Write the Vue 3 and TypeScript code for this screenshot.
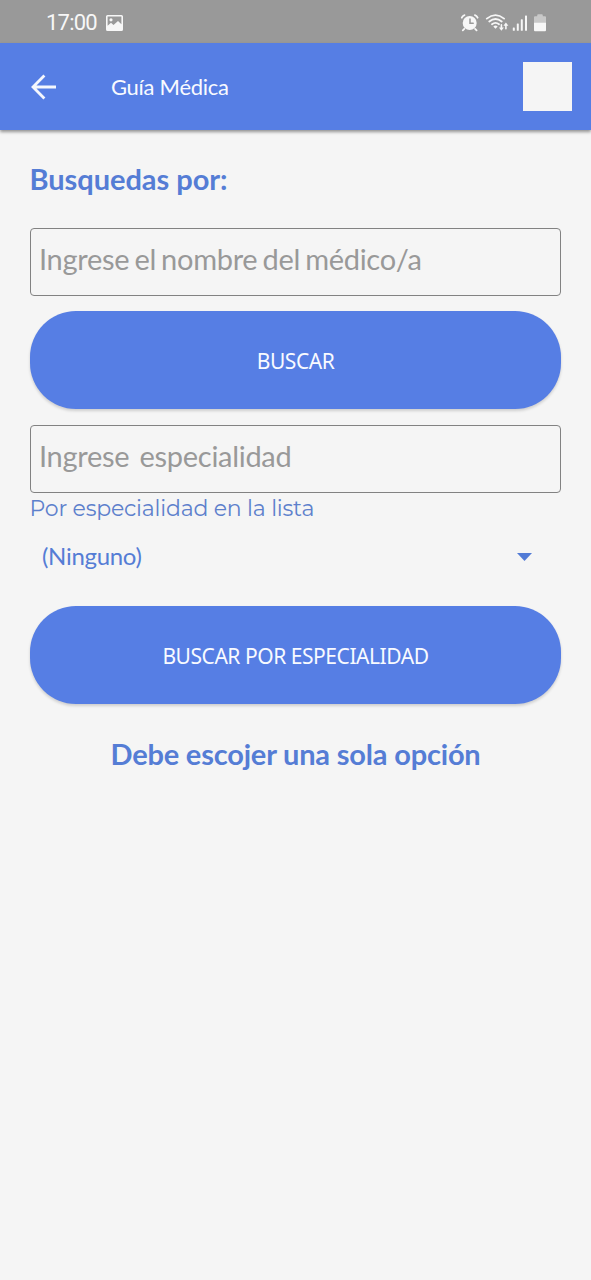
<script setup lang="ts">
import { ref } from 'vue'

const doctor = ref('')
const specialty = ref('')
const selected = ref('(Ninguno)')
</script>

<template>
  <div class="screen">
    <div class="status">
      <span class="time">17:00</span>
      <svg class="picture" width="17" height="16" viewBox="0 0 17 16">
        <path fill="#f7f7f7" fill-rule="evenodd" d="M1.5 0h14A1.5 1.5 0 0 1 17 1.5v13a1.5 1.5 0 0 1-1.5 1.5h-14A1.5 1.5 0 0 1 0 14.5v-13A1.5 1.5 0 0 1 1.5 0ZM1.6 1.6v9.2L5 7.8l2.5 2.1L12 6.1l3.4 3.2V1.6ZM5 3.2a1.6 1.6 0 1 1 0 3.2a1.6 1.6 0 0 1 0-3.2Z" />
      </svg>
      <svg class="indicators" width="88" height="20" viewBox="460 12.5 88 20">
        <g fill="none" stroke="#f7f7f7" stroke-linecap="round">
          <path stroke-width="1.8" d="M461.8 17.2q.8-2 2.7-2.6M477.6 17.2q-.8-2-2.7-2.6M464.3 28.3l-1.5 1.5M475.1 28.3l1.5 1.5" />
          <circle cx="469.7" cy="22.5" r="7" fill="#f7f7f7" stroke="none" />
          <path stroke="#999" stroke-width="1.5" d="M470 18.5v4.3h3.2" />
          <path stroke-width="1.8" d="M486.8 18.1q8.7-7 17.3 0M489.3 21q6.2-5.1 12.4 0M492 23.8q3.5-2.8 7 0" />
          <path stroke-width="1.6" d="M501.4 24.2v4M505.9 28.2v-4" />
        </g>
        <g fill="#f7f7f7">
          <path d="M493.3 26q2.2-1.8 4.4 0l-2.2 2.3ZM498.9 27h5l-2.5 3.2ZM503.4 25.3h5l-2.5-3.2Z" />
          <rect x="512.8" y="27" width="2" height="3.3" rx=".6" />
          <rect x="516.8" y="23" width="2" height="7.3" rx=".6" />
          <rect x="520.8" y="18.8" width="2" height="11.5" rx=".6" />
          <rect x="525" y="15" width="2" height="15.3" rx=".6" />
          <path opacity=".5" d="M534 22v-5.2q0-1 1-1h2.2v-1q0-1 1-1h3.6q1 0 1 1v1h2.2q1 0 1 1V22Z" />
          <path d="M534 22h12v7.7q0 1-1 1h-10q-1 0-1-1Z" />
        </g>
      </svg>
    </div>

    <header class="bar">
      <button class="back" type="button" aria-label="Volver">
        <svg width="26" height="26" viewBox="0 0 26 26">
          <path fill="none" stroke="#f4f7fd" stroke-width="2.8" d="M25 13H2.5M13.4 1.5L2 13l11.4 11.5" />
        </svg>
      </button>
      <h1 class="title">Guía Médica</h1>
      <div class="tile"></div>
    </header>

    <main class="content">
      <h2 class="heading"><span>Busquedas por:</span></h2>
      <input v-model="doctor" class="field" type="text" placeholder="Ingrese el nombre del médico/a" />
      <button class="action first" type="button"><span>BUSCAR</span></button>
      <input v-model="specialty" class="field" type="text" placeholder="Ingrese  especialidad" />
      <p class="caption"><span>Por especialidad en la lista</span></p>
      <div class="select">
        <span>{{ selected }}</span>
        <svg width="15" height="8" viewBox="0 0 15 8"><path fill="#527bd6" d="M0 0h15L7.5 8Z" /></svg>
      </div>
      <button class="action" type="button"><span>BUSCAR POR ESPECIALIDAD</span></button>
      <p class="notice"><span>Debe escojer una sola opción</span></p>
    </main>
  </div>
</template>

<style>
body {
  margin: 0;
  background: #f5f5f5;
}
</style>

<style scoped>
.screen {
  box-sizing: border-box;
  width: 100%;
  min-height: 1280px;
  background: #f5f5f5;
  font-family: Lato, sans-serif;
}

.status {
  display: flex;
  align-items: center;
  box-sizing: border-box;
  height: 43px;
  padding: 2px 43px 0 46px;
  background: #999;
  color: #f7f7f7;
}

.time {
  width: 60px;
  font: 22px/26px Roboto, sans-serif;
  letter-spacing: -0.8px;
}

.indicators {
  margin-left: auto;
}

.bar {
  display: flex;
  align-items: center;
  box-sizing: border-box;
  height: 87px;
  padding: 0 19px 0 30.5px;
  background: #567ee4;
  box-shadow: 0 2px 3px rgba(0, 0, 0, 0.4);
}

.back {
  display: flex;
  width: 80.5px;
  padding: 0;
  border: 0;
  background: none;
}

.title {
  margin: 0;
  color: #f8faff;
  font-size: 22px;
  font-weight: 400;
  line-height: 28px;
  letter-spacing: -0.28px;
}

.tile {
  width: 49px;
  height: 49px;
  margin-left: auto;
  background: #f5f5f5;
}

.content {
  display: flex;
  flex-direction: column;
  padding: 31px 30px 0;
}

.heading,
.notice {
  margin: 0;
  color: #557dd5;
  font-size: 29px;
  font-weight: 700;
  line-height: 36px;
  letter-spacing: -0.05px;
}

.heading {
  margin-bottom: 31px;
  text-indent: -0.5px;
}

.field {
  box-sizing: border-box;
  width: 100%;
  height: 68px;
  padding: 0 8px 7px;
  border: 1px solid #828282;
  border-radius: 4px;
  outline: none;
  background: transparent;
  color: #333;
  font: 29px Lato, sans-serif;
  letter-spacing: -0.29px;
  word-spacing: -2px;
}

.field::placeholder {
  color: #999;
  opacity: 1;
}

.action {
  height: 98px;
  padding: 2px 0 0;
  border: 0;
  border-radius: 46px;
  background: #567ee4;
  box-shadow: 0 2px 3px rgba(0, 0, 0, 0.16);
  color: #f8faff;
  font: 21px "Noto Sans", sans-serif;
  letter-spacing: -0.45px;
}

.first {
  margin: 15px 0 16px;
}

.caption {
  margin: 0;
  color: #5d80cc;
  font: 400 22px/32px Montserrat, Inter, sans-serif;
  letter-spacing: -0.2px;
  text-indent: -0.5px;
}

.select {
  display: flex;
  align-items: center;
  justify-content: space-between;
  height: 64px;
  margin-bottom: 17px;
  padding: 0 29px 0 12px;
  color: #557dd5;
  font-size: 24px;
  letter-spacing: -0.3px;
}

.select span {
  padding-bottom: 4px;
}

.notice {
  margin-top: 32px;
  letter-spacing: -0.19px;
  text-align: center;
}
</style>
